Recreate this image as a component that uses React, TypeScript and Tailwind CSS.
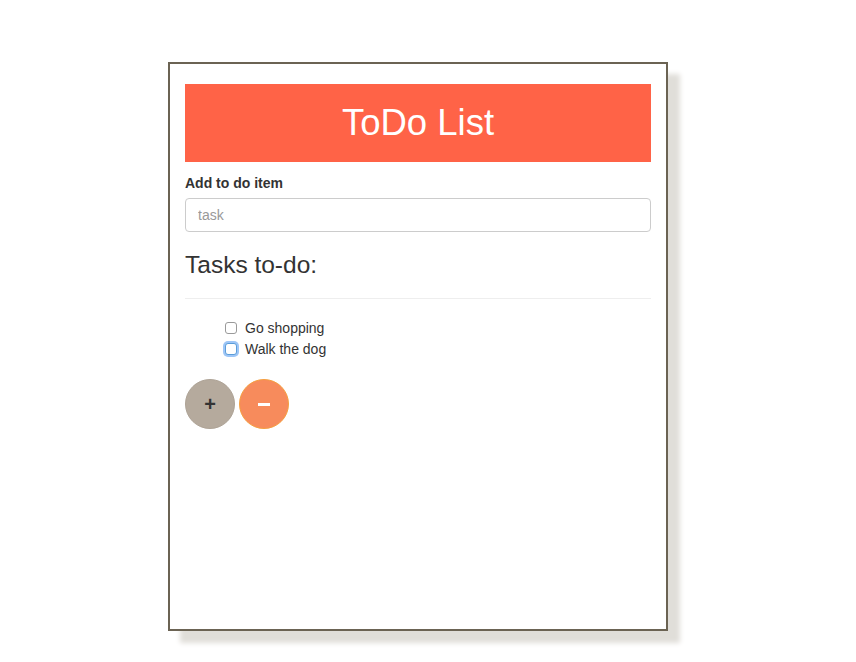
import React from "react";

export default function App() {
  const font = { fontFamily: '"Liberation Sans", Arial, sans-serif' };
  return (
    <div className="min-h-[662px] w-[856px] bg-white pt-[62px] pl-[168px] text-[#333]" style={font}>
      <div className="w-[500px] h-[569px] border-2 border-[#6b6353] bg-white shadow-[12px_12px_5px_#e0ded9] px-[15px] pt-[20px]">
        <div className="h-[78px] bg-[#ff6347] flex items-center justify-center">
          <h1 className="text-[36.5px] leading-[40px] text-white font-normal">ToDo List</h1>
        </div>
        <label className="block mt-[11px] mb-[5px] text-[14px] leading-[20px] font-bold text-[#333]">Add to do item</label>
        <input
          className="block w-full h-[34px] border border-[#ccc] rounded-[4px] px-[12px] text-[14px] placeholder:text-[#999] outline-none"
          placeholder="task"
          style={font}
        />
        <h3 className="mt-[20px] text-[24.5px] leading-[26.4px] text-[#333]">Tasks to-do:</h3>
        <hr className="mt-[20px] border-t border-[#eee]" />
        <ul className="mt-[19px] pl-[40px] text-[14px] leading-[20px] text-[#333]">
          <li className="flex items-center h-[20px]">
            <span className="inline-block w-[12px] h-[12px] rounded-[3px] border border-[#9a9a9a] bg-white mr-[8px]" />
            Go shopping
          </li>
          <li className="flex items-center h-[21px]">
            <span className="inline-block w-[12px] h-[12px] rounded-[3px] border border-[#5b9dd9] bg-white mr-[8px] shadow-[0_0_0_2px_#9ec6f7]" />
            Walk the dog
          </li>
        </ul>
        <div className="mt-[20px] flex gap-[4px]">
          <button className="w-[50px] h-[50px] rounded-full bg-[#b5aa9d] border border-[#aea396] flex items-center justify-center text-[#333] text-[20px] font-bold">
            +
          </button>
          <button className="w-[50px] h-[50px] rounded-full bg-[#f78b5c] border border-[#f5a040] flex items-center justify-center">
            <span className="block w-[12px] h-[3px] bg-white" />
          </button>
        </div>
      </div>
    </div>
  );
}
